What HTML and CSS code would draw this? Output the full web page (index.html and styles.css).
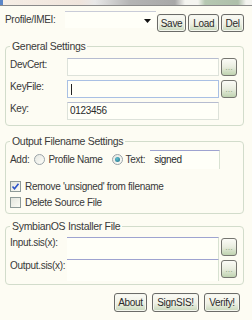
FILE: index.html
```html
<!DOCTYPE html>
<html lang="en">
<head>
<meta charset="UTF-8">
<title>SignSIS</title>
<link rel="stylesheet" href="styles.css">
</head>
<body>

<!-- title bar remnant -->
<div class="titlebar"></div>

<div class="form">

  <div class="profile-row">
    <span class="lbl">Profile/IMEI:</span>
    <div class="combo">
      <svg class="arrow" width="7" height="4" viewBox="0 0 7 4"><path d="M0 0h7L3.5 4z" fill="#111"/></svg>
    </div>
    <button class="btn save">Save</button>
    <button class="btn load">Load</button>
    <button class="btn del">Del</button>
  </div>

  <fieldset class="group general">
    <legend>General Settings</legend>
    <div class="field">
      <span class="lbl">DevCert:</span>
      <div class="box"></div>
      <button class="dots">...</button>
    </div>
    <div class="field">
      <span class="lbl">KeyFile:</span>
      <div class="box focus"><span class="caret"></span></div>
      <button class="dots">...</button>
    </div>
    <div class="field">
      <span class="lbl">Key:</span>
      <div class="box key">0123456</div>
    </div>
  </fieldset>

  <fieldset class="group output">
    <legend>Output Filename Settings</legend>
    <div class="add-row">
      <span>Add:</span>
      <span class="radio"></span>
      <span>Profile Name</span>
      <span class="radio on"></span>
      <span>Text:</span>
      <div class="box text">signed</div>
    </div>
    <div class="check-row">
      <span class="check on">
        <svg width="9" height="9" viewBox="0 0 9 9"><path d="M1.5 4.5l2 2.2 4-5" fill="none" stroke="#2b52c8" stroke-width="1.6"/></svg>
      </span>
      <span>Remove 'unsigned' from filename</span>
    </div>
    <div class="check-row">
      <span class="check"></span>
      <span>Delete Source File</span>
    </div>
  </fieldset>

  <fieldset class="group sis">
    <legend>SymbianOS Installer File</legend>
    <div class="field">
      <span class="lbl">Input.sis(x):</span>
      <div class="box flat"></div>
      <button class="dots">...</button>
    </div>
    <div class="field">
      <span class="lbl">Output.sis(x):</span>
      <div class="box flat"></div>
      <button class="dots">...</button>
    </div>
  </fieldset>

  <div class="actions">
    <button class="btn about">About</button>
    <button class="btn sign">SignSIS!</button>
    <button class="btn verify">Verify!</button>
  </div>

</div>

</body>
</html>
```

FILE: styles.css
```css
body{
 margin:0;
 font-family:'Liberation Sans',Arial,sans-serif;
 font-size:10px;
 letter-spacing:-0.3px;
 color:#383838;
 background:#fdfcf3;
 overflow:hidden;
}

/* TITLE BAR */
.titlebar{
 height:5px;
 border-bottom:1px solid #8a8a8a;
 background:
  linear-gradient(90deg,#5b86c8 0,#5b86c8 3px,transparent 3px),
  linear-gradient(90deg,#f6eee6 0,#efe4dc 80px,#e8e8e8 95px,#b4b4b4 130px,#a8a8a8 175px,#f4f4f0 185px,#f4f4f0 198px,#b6c8b2 205px,#aebfaa 238px,#f4f4f0 246px);
}

.form{
 padding:0 8px 0 5px;
}

/* PROFILE ROW */
.profile-row{
 display:flex;
 align-items:flex-start;
 margin-top:5px;
 height:21px;
}

.profile-row .lbl{
 width:61px;
 padding-top:3px;
}

.combo{
 width:91px;
 height:17px;
 box-sizing:border-box;
 border-top:1px solid #c9ccd8;
 background:#fffff8;
 position:relative;
}

.combo .arrow{
 position:absolute;
 right:5px;
 top:7px;
}

/* BUTTONS */
.btn{
 font:inherit;
 letter-spacing:inherit;
 color:#2a2a2a;
 height:18px;
 padding:0;
 border:1px solid #6b6b68;
 border-radius:3px;
 background:linear-gradient(#fbfbf6,#eef0e4 55%,#c7d8bb);
 box-shadow:inset 0 0 0 1px #f4f6ee;
}

.profile-row .btn{margin-top:3px;margin-left:2px;}
.profile-row .save{margin-left:1px;width:30px;}
.profile-row .load{width:31px;}
.profile-row .del{width:23px;}

.dots{
 width:16px;
 height:18px;
 margin-left:2px;
 padding:0 0 3px;
 font:inherit;
 font-size:9px;
 color:#9aac8c;
 border:1px solid #757570;
 border-radius:3px;
 background:linear-gradient(#fbfbf6,#e9eddf 50%,#bfd3b0);
 line-height:1;
 display:flex;
 align-items:flex-end;
 justify-content:center;
 flex:none;
}

/* GROUPS */
.group{
 margin:0;
 padding:0 4px 5px 4px;
 border:1px solid #d2dccb;
 border-radius:4px;
}

.group legend{
 padding:0 2px;
 line-height:12px;
 font-size:10.5px;
 color:#3a3a3a;
}

.general{margin-top:8px;}
.output{margin-top:9px;}
.sis{margin-top:6px;padding-bottom:3px;}

.field{
 display:flex;
 align-items:flex-start;
 margin-top:4px;
}

.general .field:first-of-type{margin-top:6px;}

.field .lbl{
 width:57px;
 flex:none;
 padding-top:1px;
}

.box{
 width:152px;
 height:18px;
 box-sizing:border-box;
 border:1px solid #dde2da;
 border-top-color:#b6bcd0;
 background:#fffff8;
 padding:2px 0 0 3px;
 color:#2a2a2a;
}

.box.focus{
 border-color:#a9c0e4;
 position:relative;
}

.caret{
 position:absolute;
 left:3px;
 top:3px;
 width:1px;
 height:11px;
 background:#222;
}

.box.key{
 padding-left:2px;
}

.box.flat{
 height:22px;
 border:none;
 border-top:1px solid #9ea3d0;
 border-right:1px solid #d8e2d2;
}

.sis .field{margin-top:0;}
.sis .field .lbl{padding-top:0;}
.sis .field:first-of-type{margin-top:5px;}
.sis .field:last-of-type .lbl{padding-top:1px;}
.sis .dots{margin-top:1px;}

/* OUTPUT OPTIONS */
.add-row{
 display:flex;
 align-items:center;
 margin-top:3px;
}

.radio{
 width:9px;
 height:9px;
 border:1px solid #9aa3a8;
 border-radius:50%;
 background:linear-gradient(135deg,#e6e8e2,#fdfdf8);
 margin:0 3px 0 5px;
 flex:none;
 position:relative;
}

.radio.on{
 margin-left:9px;
}

.radio.on::after{
 content:"";
 position:absolute;
 left:2px;
 top:2px;
 width:5px;
 height:5px;
 border-radius:50%;
 background:radial-gradient(circle at 40% 35%,#5fc0d0,#1f6e86);
}

.box.text{
 width:70px;
 height:19px;
 margin-left:5px;
 border:none;
 border-top:1px solid #9ea3d0;
 border-right:1px solid #d8e2d2;
 padding:3px 0 0 4px;
}

.check-row{
 display:flex;
 align-items:center;
 margin-top:12px;
}

.check-row + .check-row{margin-top:5px;}

.check{
 width:9px;
 height:9px;
 border:1px solid #8e9a98;
 background:linear-gradient(135deg,#e3e5dd,#fbfbf5);
 margin:0 4px 0 0;
 position:relative;
}

.check svg{
 position:absolute;
 left:0;
 top:0;
}

/* BOTTOM ACTIONS */
.actions{
 display:flex;
 justify-content:flex-end;
 gap:5px;
 margin:8px 4px 0 0;
}

.actions .btn{height:19px;}
.about{width:33px;}
.sign{width:47px;}
.verify{width:36px;}
```
